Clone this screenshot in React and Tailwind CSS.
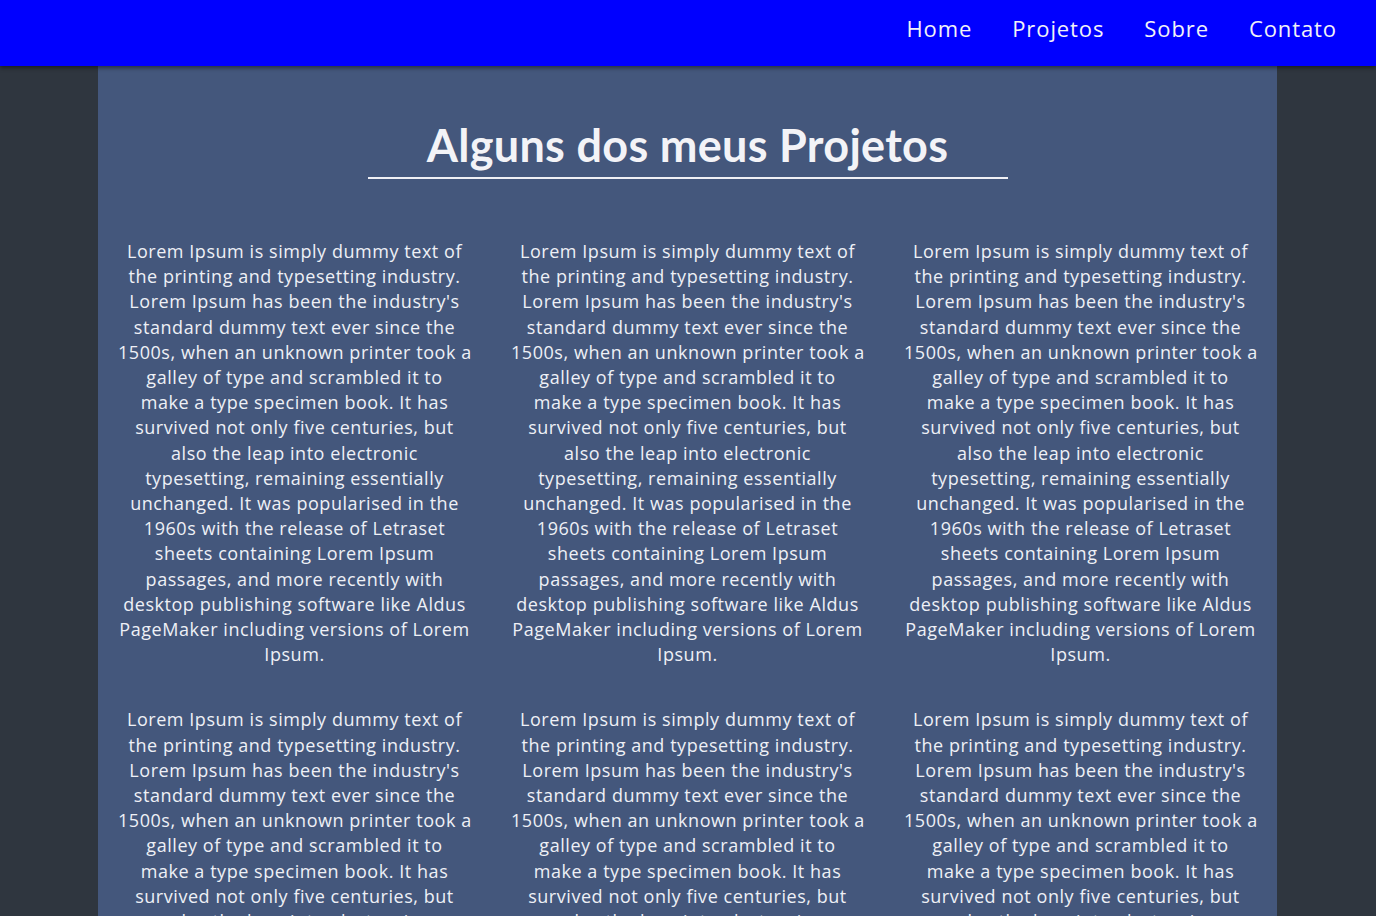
const navLinks = ['Home', 'Projetos', 'Sobre', 'Contato'];

const loremLines = [
    'Lorem Ipsum is simply dummy text of',
    'the printing and typesetting industry.',
    "Lorem Ipsum has been the industry's",
    'standard dummy text ever since the',
    '1500s, when an unknown printer took a',
    'galley of type and scrambled it to',
    'make a type specimen book. It has',
    'survived not only five centuries, but',
    'also the leap into electronic',
    'typesetting, remaining essentially',
    'unchanged. It was popularised in the',
    '1960s with the release of Letraset',
    'sheets containing Lorem Ipsum',
    'passages, and more recently with',
    'desktop publishing software like Aldus',
    'PageMaker including versions of Lorem',
    'Ipsum.',
];

function ProjectCard() {
    return (
        <p className="px-5 text-center text-[18px] leading-[25.2px] tracking-[0.55px] text-[#eef0f6]">
            {loremLines.map((line, i) => (
                <span key={i} className="block whitespace-nowrap">
                    {line}
                </span>
            ))}
        </p>
    );
}

export default function App() {
    return (
        <div className="min-h-screen bg-[#2f363f] font-['Open_Sans',sans-serif]">
            <header className="relative z-10 flex h-[66px] items-center justify-end bg-[#0000ff] pb-[9px] pr-[39px] shadow-[0_2px_4px_rgba(0,0,0,0.45)]">
                <nav className="flex gap-10">
                    {navLinks.map((link) => (
                        <a key={link} href="#" className="text-[22px] tracking-[0.9px] text-[#f2f2f7]">
                            {link}
                        </a>
                    ))}
                </nav>
            </header>

            <main className="ml-[98px] w-[1179px] bg-[#44577c] pb-10">
                <div className="flex justify-center pt-[50px]">
                    <h1 className="w-[640px] border-b-2 border-[#f0f0f5] pb-[3px] text-center font-['Lato',sans-serif] text-[45px] font-bold leading-[58px] tracking-[0.3px] text-[#f3f3f7]">
                        Alguns dos meus Projetos
                    </h1>
                </div>

                <div className="mt-[60px] grid grid-cols-3 gap-y-[40px]">
                    {Array.from({ length: 6 }).map((_, i) => (
                        <ProjectCard key={i} />
                    ))}
                </div>
            </main>
        </div>
    );
}
